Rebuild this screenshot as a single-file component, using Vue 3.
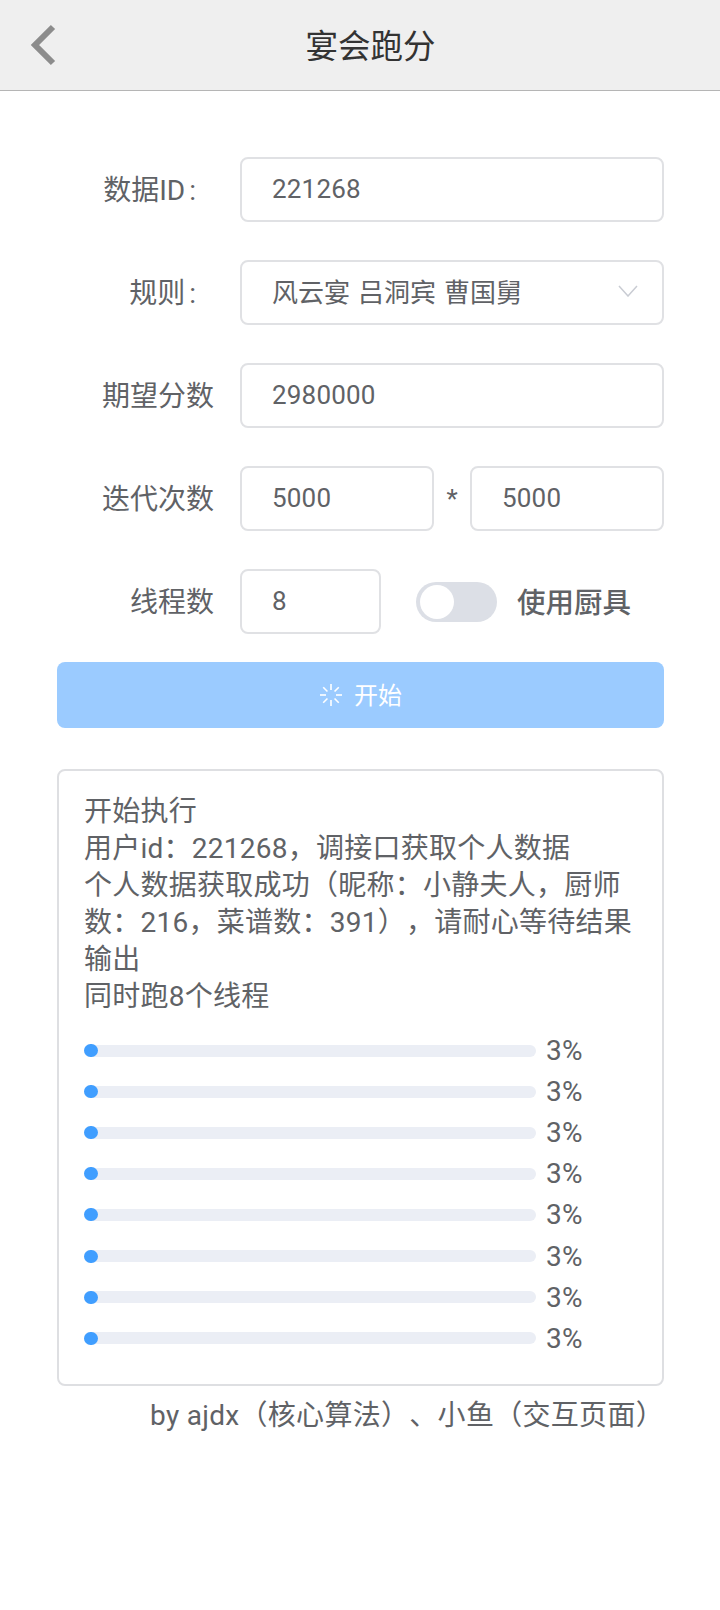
<template>
    <div class="page">
        <header class="nav">
            <svg class="back" viewBox="0 0 26 42" width="26" height="42">
                <path d="M23 3 L5 21 L23 39" fill="none" stroke="#8c8c8c" stroke-width="6" />
            </svg>
            <span class="nav-title">宴会跑分</span>
        </header>

        <main class="content">
            <div class="row">
                <label class="label"><span>数据ID</span><span class="colon">:</span></label>
                <input class="field grow" value="221268" />
            </div>
            <div class="row">
                <label class="label"><span>规则</span><span class="colon">:</span></label>
                <div class="field grow select">
                    <span class="select-text">风云宴 吕洞宾 曹国舅</span>
                    <svg class="arrow" viewBox="0 0 20 12" width="20" height="12">
                        <path d="M1 1 L10 11 L19 1" fill="none" stroke="#c9ccd3" stroke-width="1.5" />
                    </svg>
                </div>
            </div>
            <div class="row">
                <label class="label">期望分数</label>
                <input class="field grow" value="2980000" />
            </div>
            <div class="row">
                <label class="label">迭代次数</label>
                <input class="field grow half" value="5000" />
                <span class="times">*</span>
                <input class="field grow half" value="5000" />
            </div>
            <div class="row">
                <label class="label">线程数</label>
                <input class="field threads" value="8" />
                <div class="switch"><span class="knob"></span></div>
                <span class="switch-text">使用厨具</span>
            </div>

            <button class="start">
                <svg class="spinner" viewBox="0 0 24 24" width="24" height="24">
                    <line v-for="a in spokes" :key="a" x1="12" y1="1" x2="12" y2="7" stroke="#fff" stroke-width="1.6" :transform="`rotate(${a} 12 12)`" />
                </svg>
                <span class="start-text">开始</span>
            </button>

            <section class="log">
                <div v-for="line in lines" :key="line" class="log-line">{{ line }}</div>
                <div class="bars">
                    <div v-for="(p, i) in progress" :key="i" class="bar-row">
                        <div class="track">
                            <div class="fill" :style="{ width: p + '%' }"></div>
                        </div>
                        <span class="percent">{{ p }}%</span>
                    </div>
                </div>
            </section>

            <div class="credit">by ajdx（核心算法）、小鱼（交互页面）</div>
        </main>
    </div>
</template>

<script setup>
const spokes = [0, 45, 90, 135, 180, 225, 270, 315];

const lines = [
    '开始执行',
    '用户id：221268，调接口获取个人数据',
    '个人数据获取成功（昵称：小静夫人，厨师数：216，菜谱数：391），请耐心等待结果输出',
    '同时跑8个线程'
];

const progress = [3, 3, 3, 3, 3, 3, 3, 3];
</script>

<style>
html,
body {
    background: #fff;
}
</style>

<style scoped>
.page {
    width: 720px;
    height: 1610px;
    background: #fff;
    color: #606266;
    font-family: Roboto, "Noto Sans CJK SC", sans-serif;
    text-spacing-trim: space-all;
    font-feature-settings: "chws" 0, "palt" 0;
    overflow: hidden;
}

.nav {
    position: relative;
    height: 91px;
    box-sizing: border-box;
    display: flex;
    align-items: center;
    justify-content: center;
    padding: 0 0 4px 21px;
    background: #efefef;
    border-bottom: 1px solid #b5b5b5;
}

.back {
    position: absolute;
    left: 30px;
    top: 24px;
}

.nav-title {
    font-size: 32.5px;
    color: #333;
}

.content {
    padding: 66px 56px 0 57px;
}

.row {
    display: flex;
    align-items: center;
    height: 65px;
    margin-bottom: 38px;
}

.label {
    flex: none;
    width: 157px;
    padding: 0 26px 3px 0;
    text-align: right;
    font-size: 28px;
    white-space: nowrap;
}

.colon {
    padding-left: 4px;
    padding-right: 18px;
}

.field {
    box-sizing: border-box;
    height: 65px;
    padding: 0 30px 2px;
    background: #fff;
    border: 2px solid #e0e1e4;
    border-radius: 8px;
    color: #606266;
    font-family: inherit;
    font-size: 26px;
    letter-spacing: 0.2px;
    outline: none;
    min-width: 0;
}

.grow {
    flex: 1;
}

.select {
    display: flex;
    align-items: center;
    justify-content: space-between;
}

.select-text {
    padding-bottom: 3px;
    letter-spacing: 0;
    word-spacing: 1.5px;
}

.arrow {
    margin: 0 -6px 1px 0;
}

.times {
    width: 36px;
    text-align: center;
    font-size: 26px;
}

.threads {
    width: 141px;
}

.switch {
    position: relative;
    width: 81px;
    height: 40px;
    margin-left: 35px;
    background: #dcdfe6;
    border-radius: 20px;
}

.knob {
    position: absolute;
    left: 4px;
    top: 3px;
    width: 34px;
    height: 34px;
    background: #fff;
    border-radius: 50%;
}

.switch-text {
    margin-left: 20px;
    font-size: 28.5px;
    font-weight: 500;
    padding-bottom: 3px;
}

.start {
    display: flex;
    align-items: center;
    justify-content: center;
    gap: 11px;
    width: 100%;
    height: 66px;
    padding: 0;
    margin-top: -10px;
    background: #9bcbff;
    border: none;
    border-radius: 8px;
    color: #fff;
    font-family: inherit;
    font-size: 24px;
}

.start-text {
    padding-bottom: 3px;
}

.log {
    box-sizing: border-box;
    height: 617px;
    margin-top: 41px;
    padding: 22px 25px 0;
    border: 2px solid #dedfe2;
    border-radius: 8px;
    font-size: 28px;
    line-height: 37px;
    letter-spacing: 0.25px;
}

.bars {
    margin-top: 15px;
}

.bar-row {
    display: flex;
    align-items: center;
    height: 41.1px;
}

.track {
    width: 452px;
    height: 12px;
    background: #ebeef5;
    border-radius: 6px;
}

.fill {
    height: 13px;
    min-width: 13px;
    margin-top: -0.5px;
    background: #409eff;
    border-radius: 7px;
}

.percent {
    margin-left: 10px;
    font-size: 28px;
    letter-spacing: 0.3px;
}

.credit {
    margin-top: 9px;
    text-align: right;
    font-size: 28px;
    line-height: 42px;
    letter-spacing: 0.3px;
}
</style>
